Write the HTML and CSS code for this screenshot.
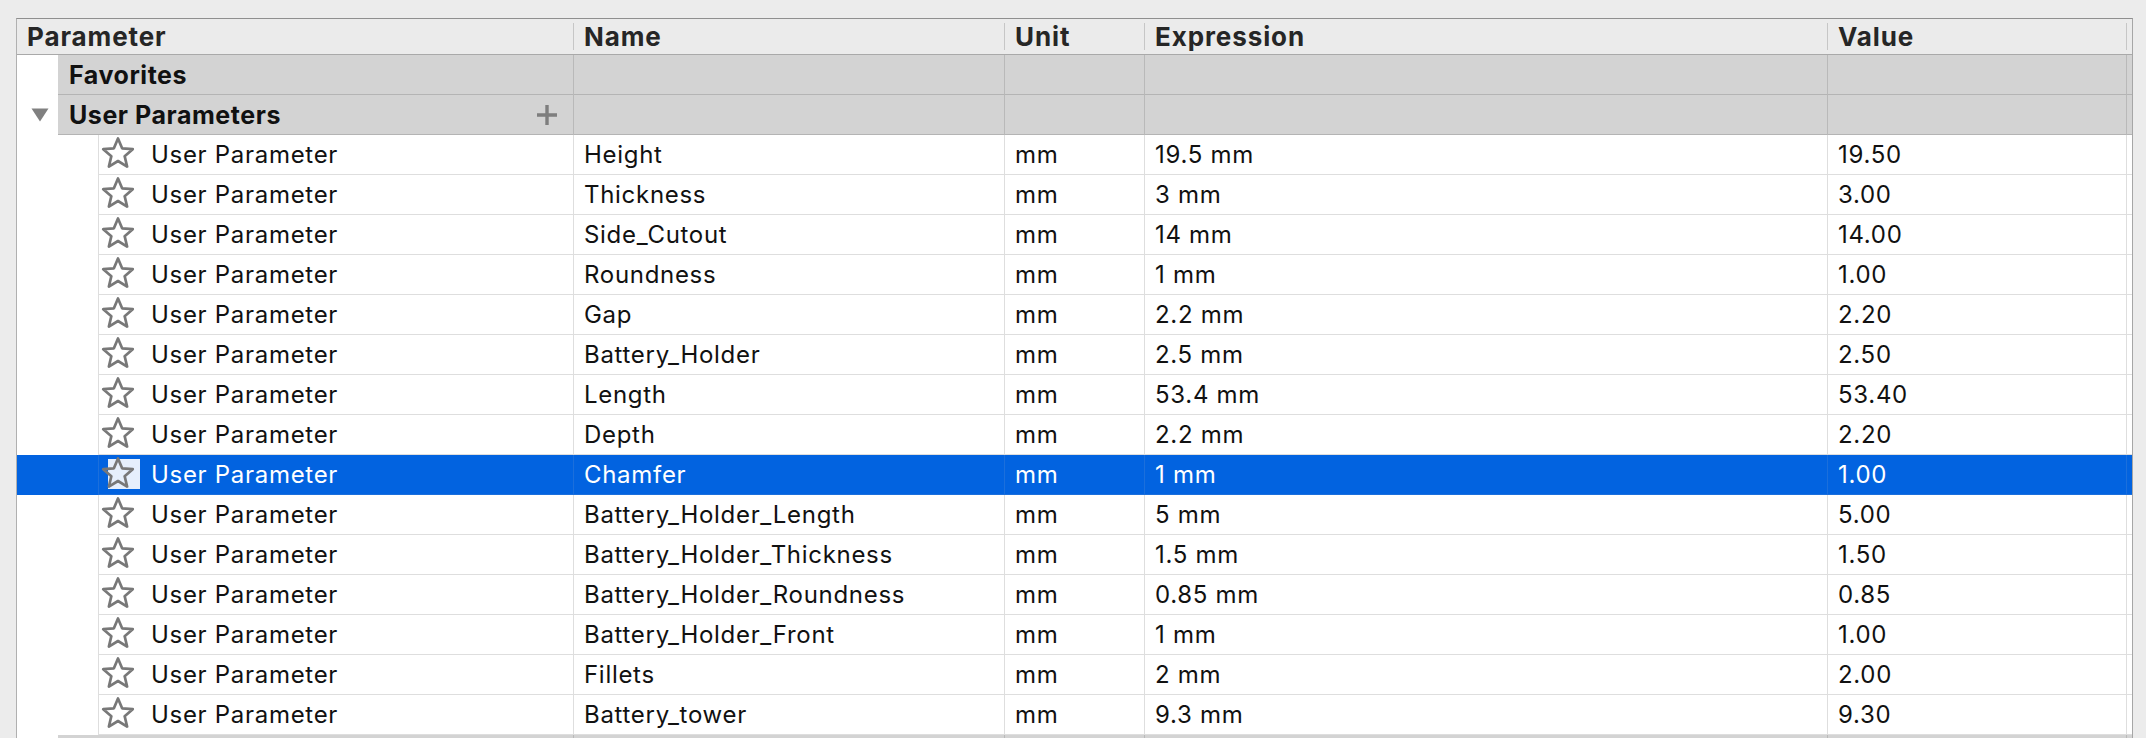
FILE: index.html
```html
<!DOCTYPE html>
<html>
<head>
<meta charset="utf-8">
<title>Parameters</title>
<link rel="stylesheet" href="styles.css">
</head>
<body>
<div class="table">
  <div class="row head">
    <div class="hcell"><span class="hlabel">Parameter</span></div>
    <div class="hcell"><span class="hlabel">Name</span></div>
    <div class="hcell"><span class="hlabel">Unit</span></div>
    <div class="hcell"><span class="hlabel">Expression</span></div>
    <div class="hcell"><span class="hlabel">Value</span></div>
    <div class="hcell filler"></div>
  </div>

  <div class="row group">
    <div class="cell first"><div class="indent"></div><div class="inner">Favorites</div></div>
    <div class="cell"></div><div class="cell"></div><div class="cell"></div><div class="cell"></div><div class="cell filler"></div>
  </div>

  <div class="row group">
    <div class="cell first">
      <div class="indent"><svg class="tri" width="18" height="14" viewBox="0 0 18 14"><path d="M0.5 0.5H17.5L9 13.5Z" fill="#808080"/></svg></div>
      <div class="inner">User Parameters<svg class="plus" width="20" height="20" viewBox="0 0 20 20"><path d="M10 0V20M0 10H20" stroke="#7e7e7e" stroke-width="3.4"/></svg></div>
    </div>
    <div class="cell"></div><div class="cell"></div><div class="cell"></div><div class="cell"></div><div class="cell filler"></div>
  </div>

  <div class="row data">
    <div class="cell first"><div class="indent"></div><div class="inner"><span class="star"><svg width="34" height="32" viewBox="0 0 34 32"><polygon points="17,1.5 21.11,11.34 31.74,12.21 23.66,19.16 26.11,29.54 17,24 7.89,29.54 10.34,19.16 2.26,12.21 12.89,11.34" fill="none" stroke="#787878" stroke-width="2.7" stroke-linejoin="round"/></svg></span><span class="ptype">User Parameter</span></div></div>
    <div class="cell">Height</div><div class="cell">mm</div><div class="cell">19.5 mm</div><div class="cell">19.50</div><div class="cell filler"></div>
  </div>
  <div class="row data">
    <div class="cell first"><div class="indent"></div><div class="inner"><span class="star"><svg width="34" height="32" viewBox="0 0 34 32"><polygon points="17,1.5 21.11,11.34 31.74,12.21 23.66,19.16 26.11,29.54 17,24 7.89,29.54 10.34,19.16 2.26,12.21 12.89,11.34" fill="none" stroke="#787878" stroke-width="2.7" stroke-linejoin="round"/></svg></span><span class="ptype">User Parameter</span></div></div>
    <div class="cell">Thickness</div><div class="cell">mm</div><div class="cell">3 mm</div><div class="cell">3.00</div><div class="cell filler"></div>
  </div>
  <div class="row data">
    <div class="cell first"><div class="indent"></div><div class="inner"><span class="star"><svg width="34" height="32" viewBox="0 0 34 32"><polygon points="17,1.5 21.11,11.34 31.74,12.21 23.66,19.16 26.11,29.54 17,24 7.89,29.54 10.34,19.16 2.26,12.21 12.89,11.34" fill="none" stroke="#787878" stroke-width="2.7" stroke-linejoin="round"/></svg></span><span class="ptype">User Parameter</span></div></div>
    <div class="cell">Side_Cutout</div><div class="cell">mm</div><div class="cell">14 mm</div><div class="cell">14.00</div><div class="cell filler"></div>
  </div>
  <div class="row data">
    <div class="cell first"><div class="indent"></div><div class="inner"><span class="star"><svg width="34" height="32" viewBox="0 0 34 32"><polygon points="17,1.5 21.11,11.34 31.74,12.21 23.66,19.16 26.11,29.54 17,24 7.89,29.54 10.34,19.16 2.26,12.21 12.89,11.34" fill="none" stroke="#787878" stroke-width="2.7" stroke-linejoin="round"/></svg></span><span class="ptype">User Parameter</span></div></div>
    <div class="cell">Roundness</div><div class="cell">mm</div><div class="cell">1 mm</div><div class="cell">1.00</div><div class="cell filler"></div>
  </div>
  <div class="row data">
    <div class="cell first"><div class="indent"></div><div class="inner"><span class="star"><svg width="34" height="32" viewBox="0 0 34 32"><polygon points="17,1.5 21.11,11.34 31.74,12.21 23.66,19.16 26.11,29.54 17,24 7.89,29.54 10.34,19.16 2.26,12.21 12.89,11.34" fill="none" stroke="#787878" stroke-width="2.7" stroke-linejoin="round"/></svg></span><span class="ptype">User Parameter</span></div></div>
    <div class="cell">Gap</div><div class="cell">mm</div><div class="cell">2.2 mm</div><div class="cell">2.20</div><div class="cell filler"></div>
  </div>
  <div class="row data">
    <div class="cell first"><div class="indent"></div><div class="inner"><span class="star"><svg width="34" height="32" viewBox="0 0 34 32"><polygon points="17,1.5 21.11,11.34 31.74,12.21 23.66,19.16 26.11,29.54 17,24 7.89,29.54 10.34,19.16 2.26,12.21 12.89,11.34" fill="none" stroke="#787878" stroke-width="2.7" stroke-linejoin="round"/></svg></span><span class="ptype">User Parameter</span></div></div>
    <div class="cell">Battery_Holder</div><div class="cell">mm</div><div class="cell">2.5 mm</div><div class="cell">2.50</div><div class="cell filler"></div>
  </div>
  <div class="row data">
    <div class="cell first"><div class="indent"></div><div class="inner"><span class="star"><svg width="34" height="32" viewBox="0 0 34 32"><polygon points="17,1.5 21.11,11.34 31.74,12.21 23.66,19.16 26.11,29.54 17,24 7.89,29.54 10.34,19.16 2.26,12.21 12.89,11.34" fill="none" stroke="#787878" stroke-width="2.7" stroke-linejoin="round"/></svg></span><span class="ptype">User Parameter</span></div></div>
    <div class="cell">Length</div><div class="cell">mm</div><div class="cell">53.4 mm</div><div class="cell">53.40</div><div class="cell filler"></div>
  </div>
  <div class="row data">
    <div class="cell first"><div class="indent"></div><div class="inner"><span class="star"><svg width="34" height="32" viewBox="0 0 34 32"><polygon points="17,1.5 21.11,11.34 31.74,12.21 23.66,19.16 26.11,29.54 17,24 7.89,29.54 10.34,19.16 2.26,12.21 12.89,11.34" fill="none" stroke="#787878" stroke-width="2.7" stroke-linejoin="round"/></svg></span><span class="ptype">User Parameter</span></div></div>
    <div class="cell">Depth</div><div class="cell">mm</div><div class="cell">2.2 mm</div><div class="cell">2.20</div><div class="cell filler"></div>
  </div>
  <div class="row data sel">
    <div class="cell first"><div class="indent"></div><div class="inner"><span class="star focus"><svg width="34" height="32" viewBox="0 0 34 32"><polygon points="17,1.5 21.11,11.34 31.74,12.21 23.66,19.16 26.11,29.54 17,24 7.89,29.54 10.34,19.16 2.26,12.21 12.89,11.34" fill="none" stroke="#787878" stroke-width="2.7" stroke-linejoin="round"/></svg></span><span class="ptype">User Parameter</span></div></div>
    <div class="cell">Chamfer</div><div class="cell">mm</div><div class="cell">1 mm</div><div class="cell">1.00</div><div class="cell filler"></div>
  </div>
  <div class="row data">
    <div class="cell first"><div class="indent"></div><div class="inner"><span class="star"><svg width="34" height="32" viewBox="0 0 34 32"><polygon points="17,1.5 21.11,11.34 31.74,12.21 23.66,19.16 26.11,29.54 17,24 7.89,29.54 10.34,19.16 2.26,12.21 12.89,11.34" fill="none" stroke="#787878" stroke-width="2.7" stroke-linejoin="round"/></svg></span><span class="ptype">User Parameter</span></div></div>
    <div class="cell">Battery_Holder_Length</div><div class="cell">mm</div><div class="cell">5 mm</div><div class="cell">5.00</div><div class="cell filler"></div>
  </div>
  <div class="row data">
    <div class="cell first"><div class="indent"></div><div class="inner"><span class="star"><svg width="34" height="32" viewBox="0 0 34 32"><polygon points="17,1.5 21.11,11.34 31.74,12.21 23.66,19.16 26.11,29.54 17,24 7.89,29.54 10.34,19.16 2.26,12.21 12.89,11.34" fill="none" stroke="#787878" stroke-width="2.7" stroke-linejoin="round"/></svg></span><span class="ptype">User Parameter</span></div></div>
    <div class="cell">Battery_Holder_Thickness</div><div class="cell">mm</div><div class="cell">1.5 mm</div><div class="cell">1.50</div><div class="cell filler"></div>
  </div>
  <div class="row data">
    <div class="cell first"><div class="indent"></div><div class="inner"><span class="star"><svg width="34" height="32" viewBox="0 0 34 32"><polygon points="17,1.5 21.11,11.34 31.74,12.21 23.66,19.16 26.11,29.54 17,24 7.89,29.54 10.34,19.16 2.26,12.21 12.89,11.34" fill="none" stroke="#787878" stroke-width="2.7" stroke-linejoin="round"/></svg></span><span class="ptype">User Parameter</span></div></div>
    <div class="cell">Battery_Holder_Roundness</div><div class="cell">mm</div><div class="cell">0.85 mm</div><div class="cell">0.85</div><div class="cell filler"></div>
  </div>
  <div class="row data">
    <div class="cell first"><div class="indent"></div><div class="inner"><span class="star"><svg width="34" height="32" viewBox="0 0 34 32"><polygon points="17,1.5 21.11,11.34 31.74,12.21 23.66,19.16 26.11,29.54 17,24 7.89,29.54 10.34,19.16 2.26,12.21 12.89,11.34" fill="none" stroke="#787878" stroke-width="2.7" stroke-linejoin="round"/></svg></span><span class="ptype">User Parameter</span></div></div>
    <div class="cell">Battery_Holder_Front</div><div class="cell">mm</div><div class="cell">1 mm</div><div class="cell">1.00</div><div class="cell filler"></div>
  </div>
  <div class="row data">
    <div class="cell first"><div class="indent"></div><div class="inner"><span class="star"><svg width="34" height="32" viewBox="0 0 34 32"><polygon points="17,1.5 21.11,11.34 31.74,12.21 23.66,19.16 26.11,29.54 17,24 7.89,29.54 10.34,19.16 2.26,12.21 12.89,11.34" fill="none" stroke="#787878" stroke-width="2.7" stroke-linejoin="round"/></svg></span><span class="ptype">User Parameter</span></div></div>
    <div class="cell">Fillets</div><div class="cell">mm</div><div class="cell">2 mm</div><div class="cell">2.00</div><div class="cell filler"></div>
  </div>
  <div class="row data">
    <div class="cell first"><div class="indent"></div><div class="inner"><span class="star"><svg width="34" height="32" viewBox="0 0 34 32"><polygon points="17,1.5 21.11,11.34 31.74,12.21 23.66,19.16 26.11,29.54 17,24 7.89,29.54 10.34,19.16 2.26,12.21 12.89,11.34" fill="none" stroke="#787878" stroke-width="2.7" stroke-linejoin="round"/></svg></span><span class="ptype">User Parameter</span></div></div>
    <div class="cell">Battery_tower</div><div class="cell">mm</div><div class="cell">9.3 mm</div><div class="cell">9.30</div><div class="cell filler"></div>
  </div>

  <div class="row group">
    <div class="cell first"><div class="indent"></div><div class="inner"></div></div>
    <div class="cell"></div><div class="cell"></div><div class="cell"></div><div class="cell"></div><div class="cell filler"></div>
  </div>
</div>
</body>
</html>
```

FILE: styles.css
```css
html, body {
  margin: 0;
  padding: 0;
  overflow: hidden;
}

body {
  width: 2146px;
  height: 738px;
  background: #ececec;
  font-family: Inter, "Noto Sans", "Liberation Sans", sans-serif;
  color: #111;
}

.table {
  margin: 18px 0 0 16px;
  width: 2117px;
  box-sizing: border-box;
  border-top: 1px solid #8f8f8f;
  border-left: 1px solid #b0b0b0;
  border-right: 1px solid #a6a6a6;
  background: #fff;
}

.row {
  display: grid;
  grid-template-columns: 557px 431px 140px 683px 299px 5px;
  box-sizing: border-box;
}

.head {
  height: 36px;
  background: #ebebeb;
  border-bottom: 1px solid #a9a9a9;
}

.hcell {
  display: flex;
  padding: 4px 0;
  box-sizing: border-box;
}

.hlabel {
  flex: 1;
  display: flex;
  align-items: center;
  padding-left: 10px;
  line-height: 27px;
  border-right: 1px solid #c6c6c6;
  font-size: 26px;
  font-weight: 700;
  letter-spacing: 0.9px;
  color: #262626;
  white-space: nowrap;
}

.group {
  height: 40px;
  background: #fff;
}

.group .cell {
  box-sizing: border-box;
  background: #d3d3d3;
  border-right: 1px solid #b9b9b9;
  border-bottom: 1px solid #b4b4b4;
}

.group .cell.first {
  display: flex;
  background: transparent;
  border-bottom: none;
}

.group .cell.filler {
  border-right: none;
}

.group .indent {
  width: 41px;
  flex: none;
  display: flex;
  align-items: center;
  padding-left: 14px;
  box-sizing: border-box;
}

.group .inner {
  flex: 1;
  display: flex;
  align-items: center;
  padding-left: 11px;
  padding-right: 16px;
  background: #d3d3d3;
  border-bottom: 1px solid #b4b4b4;
  font-size: 25px;
  font-weight: 700;
  letter-spacing: 0.55px;
  color: #111;
  white-space: nowrap;
}

.plus {
  margin-left: auto;
}

.data {
  height: 40px;
  background: #fff;
}

.data .cell {
  display: flex;
  align-items: center;
  box-sizing: border-box;
  padding-left: 10px;
  border-right: 1px solid #dedede;
  border-bottom: 1px solid #dedede;
  font-size: 24px;
  letter-spacing: 0.7px;
  white-space: nowrap;
  overflow: hidden;
}

.data .cell.first {
  padding-left: 0;
  align-items: stretch;
  border-bottom: none;
}

.data .cell.filler {
  border-right: none;
  padding-left: 0;
}

.data .indent {
  width: 81px;
  flex: none;
}

.data .inner {
  flex: 1;
  display: flex;
  align-items: center;
  padding-left: 2px;
  border-left: 1px solid #dedede;
  border-bottom: 1px solid #dedede;
}

.star {
  position: relative;
  display: flex;
  width: 34px;
  height: 32px;
  margin-bottom: 3px;
}

.star svg {
  position: relative;
}

.star.focus::before {
  content: "";
  position: absolute;
  left: 7px;
  top: 2px;
  width: 32px;
  height: 30px;
  background: #e6effc;
}

.ptype {
  margin-left: 16px;
}

.data.sel {
  background: #0263e0;
  color: #fff;
}

.data.sel .cell,
.data.sel .inner {
  border-color: #1b6fdc;
}
```
